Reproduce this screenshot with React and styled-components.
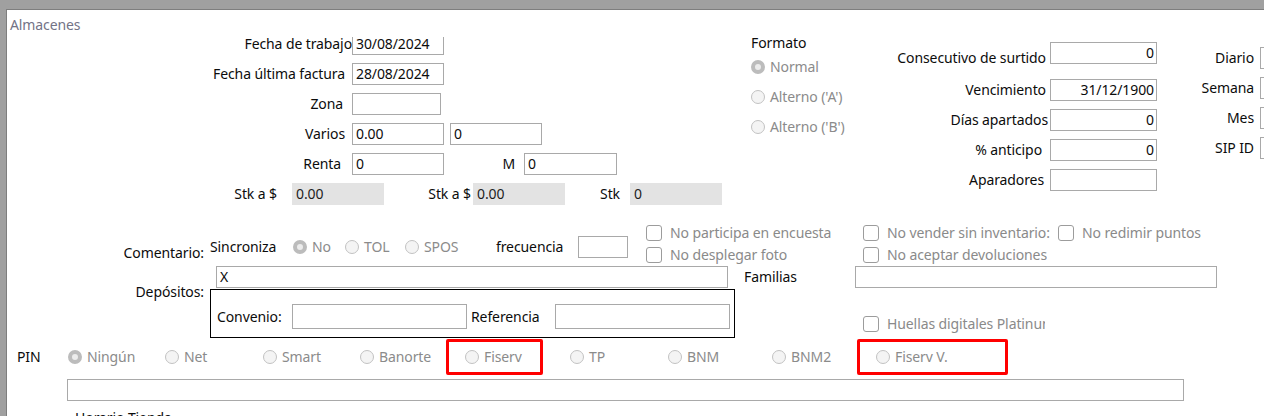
import React from "react";
import styled, { createGlobalStyle } from "styled-components";

const GlobalStyle = createGlobalStyle`
  html, body {
    margin: 0;
    padding: 0;
    overflow: hidden;
    background: #a0a0a0;
  }
  body {
    font-family: "Noto Sans", "Open Sans", sans-serif;
    font-size: 14px;
    letter-spacing: -0.1px;
    color: #0c0c0c;
  }
`;

const pinOptions = [
  { txt: "Ningún", w: 97, checked: true },
  { txt: "Net", w: 98 },
  { txt: "Smart", w: 97 },
  { txt: "Banorte", w: 105 },
  { txt: "Fiserv", w: 105, mark: 97 },
  { txt: "TP", w: 98 },
  { txt: "BNM", w: 104 },
  { txt: "BNM2", w: 104 },
  { txt: "Fiserv V.", w: 140, mark: 151 },
];

const App = () => {
  return (
    <Frame>
      <GlobalStyle />
      <Panel>
        <Title>Almacenes</Title>
        <Viewport>
          <Content>
            <TopBand>
              <LeftBlock>
                <FieldRow>
                  <Label $w={345}>Fecha de trabajo</Label>
                  <TextBox $w={92} $ml={0}>30/08/2024</TextBox>
                </FieldRow>
                <FieldRow>
                  <Label $w={338}>Fecha última factura</Label>
                  <TextBox $w={92} $ml={7}>28/08/2024</TextBox>
                </FieldRow>
                <FieldRow>
                  <Label $w={336}>Zona</Label>
                  <TextBox $w={89} $ml={9} />
                </FieldRow>
                <FieldRow>
                  <Label $w={338}>Varios</Label>
                  <TextBox $w={92} $ml={7}>0.00</TextBox>
                  <TextBox $w={92} $ml={6}>0</TextBox>
                </FieldRow>
                <FieldRow>
                  <Label $w={334}>Renta</Label>
                  <TextBox $w={92} $ml={11}>0</TextBox>
                  <Label $w={71}>M</Label>
                  <TextBox $w={93} $ml={9}>0</TextBox>
                </FieldRow>
                <FieldRow $mb={0}>
                  <Label $w={270}>Stk a $</Label>
                  <ReadBox $ml={15}>0.00</ReadBox>
                  <Label $w={87}>Stk a $</Label>
                  <ReadBox $ml={2}>0.00</ReadBox>
                  <Label $w={55}>Stk</Label>
                  <ReadBox $ml={10}>0</ReadBox>
                </FieldRow>
              </LeftBlock>

              <FormatoCol>
                <GroupTitle>Formato</GroupTitle>
                <RadioItem $h={30}>
                  <RadioDot $checked />
                  Normal
                </RadioItem>
                <RadioItem $h={30}>
                  <RadioDot />
                  Alterno ('A')
                </RadioItem>
                <RadioItem $h={30}>
                  <RadioDot />
                  Alterno ('B')
                </RadioItem>
              </FormatoCol>

              <RightCol $pt={9}>
                <FieldRow $mb={15}>
                  <Label $w={186} $drop={10}>Consecutivo de surtido</Label>
                  <TextBox $w={107} $align="right">0</TextBox>
                </FieldRow>
                <FieldRow>
                  <Label $w={186}>Vencimiento</Label>
                  <TextBox $w={107} $align="right">31/12/1900</TextBox>
                </FieldRow>
                <FieldRow>
                  <Label $w={188}>Días apartados</Label>
                  <TextBox $w={107} $ml={2} $align="right">0</TextBox>
                </FieldRow>
                <FieldRow>
                  <Label $w={182}>% anticipo</Label>
                  <TextBox $w={107} $ml={8} $align="right">0</TextBox>
                </FieldRow>
                <FieldRow>
                  <Label $w={184}>Aparadores</Label>
                  <TextBox $w={107} $ml={6} />
                </FieldRow>
              </RightCol>

              <RightCol $pt={14}>
                <FieldRow>
                  <Label $w={97}>Diario</Label>
                  <TextBox $w={60} $ml={6} />
                </FieldRow>
                <FieldRow>
                  <Label $w={97}>Semana</Label>
                  <TextBox $w={60} $ml={6} />
                </FieldRow>
                <FieldRow>
                  <Label $w={97}>Mes</Label>
                  <TextBox $w={60} $ml={6} />
                </FieldRow>
                <FieldRow>
                  <Label $w={97}>SIP ID</Label>
                  <TextBox $w={60} $ml={6} />
                </FieldRow>
              </RightCol>
            </TopBand>

            <CommentBand>
              <BottomLabel $w={197}>Comentario:</BottomLabel>
              <SyncGroup>
                <Plain $w={83}>Sincroniza</Plain>
                <RadioItem $w={52}>
                  <RadioDot $checked />
                  No
                </RadioItem>
                <RadioItem $w={60}>
                  <RadioDot />
                  TOL
                </RadioItem>
                <RadioItem $w={91}>
                  <RadioDot />
                  SPOS
                </RadioItem>
                <Plain $w={82}>frecuencia</Plain>
                <TextBox $w={50} $ml={0} />
              </SyncGroup>
              <CheckColumn $ml={18} $w={217}>
                <CheckItem>
                  <CheckBox />
                  <CheckText>No participa en encuesta</CheckText>
                </CheckItem>
                <CheckItem>
                  <CheckBox />
                  <CheckText>No desplegar foto</CheckText>
                </CheckItem>
              </CheckColumn>
              <CheckColumn $w={360}>
                <CheckLine>
                  <CheckItem $w={195}>
                    <CheckBox />
                    <CheckText $clip={163}>No vender sin inventario:</CheckText>
                  </CheckItem>
                  <CheckItem>
                    <CheckBox />
                    <CheckText $clip={121}>No redimir puntos</CheckText>
                  </CheckItem>
                </CheckLine>
                <CheckItem>
                  <CheckBox />
                  <CheckText>No aceptar devoluciones</CheckText>
                </CheckItem>
              </CheckColumn>
            </CommentBand>

            <DepositBand>
              <DepLabel>Depósitos:</DepLabel>
              <DepColumn>
                <TextBox $w={512} $ml={6}>X</TextBox>
                <DepositBox>
                  <Plain $w={75}>Convenio:</Plain>
                  <TextBox $w={175} $h={25} $ml={0} />
                  <Plain $w={84} $ml={4}>Referencia</Plain>
                  <TextBox $w={175} $h={25} $ml={0} />
                </DepositBox>
              </DepColumn>
              <FamilyColumn>
                <FieldRow $mb={0}>
                  <Plain $w={111}>Familias</Plain>
                  <TextBox $w={362} $ml={0} />
                </FieldRow>
                <CheckItem $ml={119} $mt={25}>
                  <CheckBox />
                  <CheckText $clip={158}>Huellas digitales Platinum</CheckText>
                </CheckItem>
              </FamilyColumn>
            </DepositBand>

            <PinBand>
              <Plain $w={51} $ml={10}>PIN</Plain>
              {pinOptions.map((opt) => (
                <RadioItem key={opt.txt} $w={opt.w} $h={38} $mark={opt.mark}>
                  <RadioDot $checked={opt.checked} />
                  {opt.txt}
                </RadioItem>
              ))}
            </PinBand>

            <TextBox $w={1117} $ml={60} $mt={3} />
            <Plain $ml={68} $mt={8}>Horario Tienda</Plain>
          </Content>
        </Viewport>
      </Panel>
    </Frame>
  );
};

export default App;

const Frame = styled.div`
  width: 1264px;
  height: 416px;
  box-sizing: border-box;
  padding: 9px 0 0 6px;
  background: #a0a0a0;
  overflow: hidden;
`;
const Panel = styled.div`
  width: 1320px;
  height: 420px;
  background: #fff;
  border-top: 1px solid #7e7e7e;
  border-left: 1px solid #7e7e7e;
`;
const Title = styled.div`
  height: 27px;
  box-sizing: border-box;
  padding: 6px 0 0 3px;
  line-height: 18px;
  color: #737386;
`;
const Viewport = styled.div`
  height: 379px;
  overflow: hidden;
`;
const Content = styled.div`
  margin-top: -4px;
  display: flex;
  flex-direction: column;
  align-items: flex-start;
`;
const TopBand = styled.div`
  display: flex;
  height: 180px;
`;
const LeftBlock = styled.div`
  width: 744px;
  display: flex;
  flex-direction: column;
`;
const FieldRow = styled.div`
  display: flex;
  align-items: center;
  height: 22px;
  margin-bottom: ${(p) => (p.$mb === undefined ? 8 : p.$mb)}px;
  flex: none;
`;
const Label = styled.div`
  width: ${(p) => p.$w}px;
  flex: none;
  text-align: right;
  white-space: nowrap;
  line-height: 18px;
  padding-top: ${(p) => p.$drop || 0}px;
`;
const Plain = styled.div`
  width: ${(p) => (p.$w ? `${p.$w}px` : "auto")};
  flex: none;
  white-space: nowrap;
  line-height: 18px;
  margin-left: ${(p) => p.$ml || 0}px;
  margin-top: ${(p) => p.$mt || 0}px;
`;
const TextBox = styled.div`
  width: ${(p) => p.$w}px;
  height: ${(p) => p.$h || 22}px;
  flex: none;
  box-sizing: border-box;
  border: 1px solid #a9a9a9;
  background: #fff;
  padding: 0 2px 0 3px;
  margin-left: ${(p) => (p.$ml === undefined ? 4 : p.$ml)}px;
  margin-top: ${(p) => p.$mt || 0}px;
  line-height: ${(p) => (p.$h || 22) - 2}px;
  text-align: ${(p) => p.$align || "left"};
  white-space: nowrap;
  overflow: hidden;
`;
const ReadBox = styled.div`
  width: 92px;
  height: 22px;
  flex: none;
  box-sizing: border-box;
  background: #e3e3e3;
  padding: 0 4px;
  margin-left: ${(p) => p.$ml}px;
  line-height: 22px;
  color: #1d1d1d;
`;
const FormatoCol = styled.div`
  width: 109px;
  display: flex;
  flex-direction: column;
`;
const GroupTitle = styled.div`
  height: 19px;
  line-height: 19px;
`;
const RightCol = styled.div`
  display: flex;
  flex-direction: column;
  padding-top: ${(p) => p.$pt}px;
`;
const RadioItem = styled.div`
  position: relative;
  display: flex;
  align-items: center;
  flex: none;
  width: ${(p) => (p.$w ? `${p.$w}px` : "auto")};
  height: ${(p) => (p.$h ? `${p.$h}px` : "auto")};
  color: #8b8b8b;
  white-space: nowrap;
  line-height: 18px;

  &::after {
    content: "";
    display: ${(p) => (p.$mark ? "block" : "none")};
    position: absolute;
    left: -19px;
    top: 1px;
    bottom: 1px;
    width: ${(p) => p.$mark || 0}px;
    box-sizing: border-box;
    border: 3px solid #ff0000;
    border-radius: 2px;
  }
`;
const RadioDot = styled.span`
  width: 14px;
  height: 14px;
  box-sizing: border-box;
  border-radius: 50%;
  flex: none;
  margin-right: 5px;
  border: ${(p) => (p.$checked ? "4px solid #bcbcbc" : "1px solid #c2c2c2")};
  background: ${(p) => (p.$checked ? "#ececec" : "#f4f4f4")};
`;
const CommentBand = styled.div`
  display: flex;
  height: 42px;
  margin-top: 7px;
`;
const BottomLabel = styled.div`
  width: ${(p) => p.$w}px;
  align-self: flex-end;
  text-align: right;
  line-height: 18px;
`;
const SyncGroup = styled.div`
  display: flex;
  align-items: center;
  height: 22px;
  margin: 16px 0 0 6px;
`;
const CheckColumn = styled.div`
  width: ${(p) => p.$w}px;
  margin: 2px 0 0 ${(p) => p.$ml || 0}px;
  display: flex;
  flex-direction: column;
`;
const CheckLine = styled.div`
  display: flex;
`;
const CheckItem = styled.div`
  display: flex;
  align-items: center;
  height: 22px;
  width: ${(p) => (p.$w ? `${p.$w}px` : "auto")};
  margin-left: ${(p) => p.$ml || 0}px;
  margin-top: ${(p) => p.$mt || 0}px;
  flex: none;
`;
const CheckBox = styled.span`
  width: 16px;
  height: 16px;
  box-sizing: border-box;
  border: 1px solid #9c9c9c;
  border-radius: 3px;
  background: #fff;
  flex: none;
  margin-right: 8px;
`;
const CheckText = styled.span`
  color: #8a8a8a;
  white-space: nowrap;
  overflow: hidden;
  max-width: ${(p) => (p.$clip ? `${p.$clip}px` : "none")};
  line-height: 18px;
`;
const DepositBand = styled.div`
  display: flex;
  margin-top: 4px;
  height: 72px;
`;
const DepLabel = styled.div`
  width: 197px;
  padding-right: 6px;
  text-align: right;
  margin-top: 17px;
  line-height: 18px;
`;
const DepColumn = styled.div`
  display: flex;
  flex-direction: column;
`;
const DepositBox = styled.div`
  width: 525px;
  height: 49px;
  box-sizing: border-box;
  margin-top: 1px;
  border: 1px solid #000;
  padding: 14px 0 0 6px;
  display: flex;
  align-items: center;
  align-content: flex-start;
  flex-wrap: wrap;
`;
const FamilyColumn = styled.div`
  display: flex;
  flex-direction: column;
  margin-left: 9px;
`;
const PinBand = styled.div`
  display: flex;
  align-items: center;
  height: 38px;
`;
